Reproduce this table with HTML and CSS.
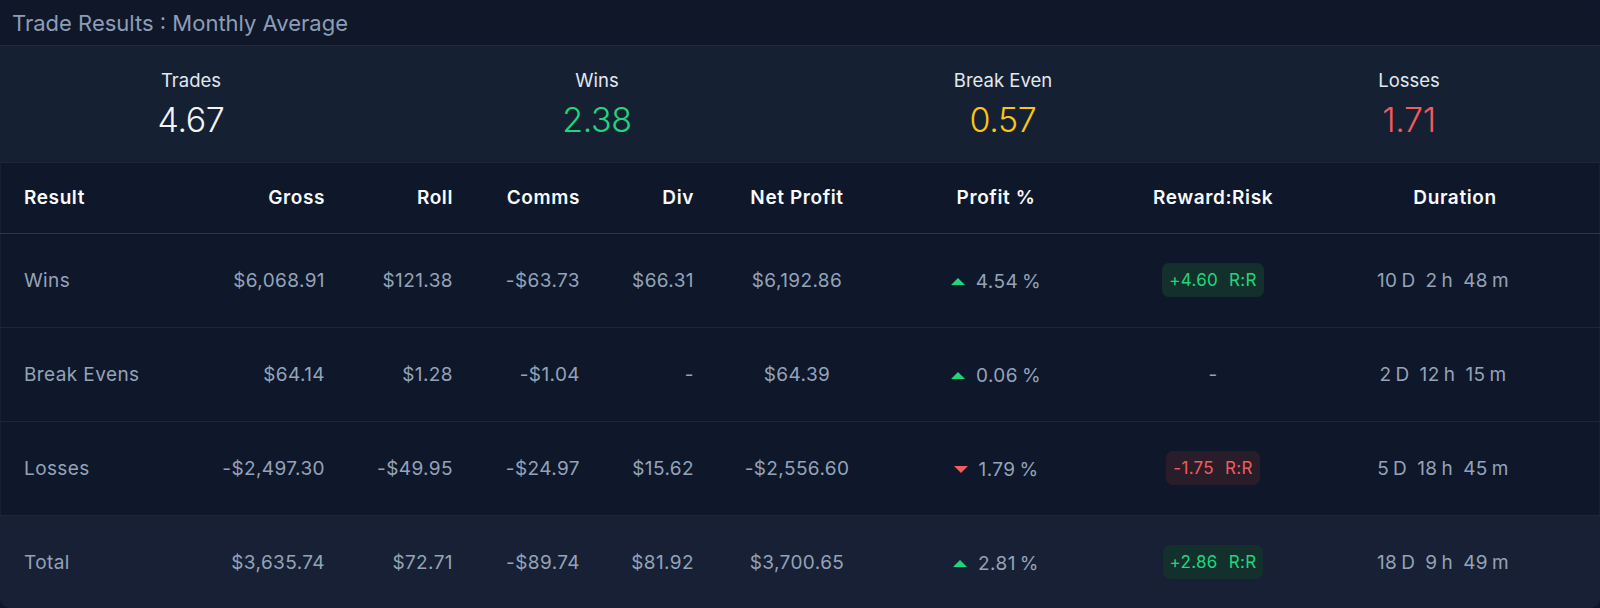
FILE: index.html
```html
<!DOCTYPE html>
<html lang="en">
<head>
<meta charset="utf-8">
<title>Trade Results : Monthly Average</title>
<link rel="stylesheet" href="styles.css">
</head>
<body>
<div class="card">
  <header class="card-title">Trade Results : Monthly Average</header>
  <section class="stats">
    <div class="stat"><div class="stat-label">Trades</div><div class="stat-value">4.67</div></div>
    <div class="stat"><div class="stat-label">Wins</div><div class="stat-value win">2.38</div></div>
    <div class="stat"><div class="stat-label">Break Even</div><div class="stat-value even">0.57</div></div>
    <div class="stat"><div class="stat-label">Losses</div><div class="stat-value loss">1.71</div></div>
  </section>
  <table class="results">
    <colgroup>
      <col class="c-result"><col class="c-gross"><col class="c-roll"><col class="c-comms"><col class="c-div"><col class="c-net"><col class="c-pct"><col class="c-rr"><col class="c-dur">
    </colgroup>
    <thead>
      <tr>
        <th class="left">Result</th>
        <th class="right">Gross</th>
        <th class="right">Roll</th>
        <th class="right">Comms</th>
        <th class="right">Div</th>
        <th class="center">Net Profit</th>
        <th class="center">Profit %</th>
        <th class="center">Reward:Risk</th>
        <th class="center dur dur-h">Duration</th>
      </tr>
    </thead>
    <tbody>
      <tr>
        <td class="left">Wins</td>
        <td class="right">$6,068.91</td>
        <td class="right">$121.38</td>
        <td class="right">-$63.73</td>
        <td class="right">$66.31</td>
        <td class="center">$6,192.86</td>
        <td class="center"><span class="pct"><svg class="tri" viewBox="0 0 14 7"><polygon points="0,7 7,0 14,7" fill="#20d67c"/></svg>4.54<span class="unit">%</span></span></td>
        <td class="center"><span class="badge up"><span>+4.60</span><span>R:R</span></span></td>
        <td class="center dur"><span class="span-group"><span>10<span class="unit">D</span></span><span>2<span class="unit">h</span></span><span>48<span class="unit">m</span></span></span></td>
      </tr>
      <tr>
        <td class="left">Break Evens</td>
        <td class="right">$64.14</td>
        <td class="right">$1.28</td>
        <td class="right">-$1.04</td>
        <td class="right">-</td>
        <td class="center">$64.39</td>
        <td class="center"><span class="pct"><svg class="tri" viewBox="0 0 14 7"><polygon points="0,7 7,0 14,7" fill="#20d67c"/></svg>0.06<span class="unit">%</span></span></td>
        <td class="center">-</td>
        <td class="center dur"><span class="span-group"><span>2<span class="unit">D</span></span><span>12<span class="unit">h</span></span><span>15<span class="unit">m</span></span></span></td>
      </tr>
      <tr>
        <td class="left">Losses</td>
        <td class="right">-$2,497.30</td>
        <td class="right">-$49.95</td>
        <td class="right">-$24.97</td>
        <td class="right">$15.62</td>
        <td class="center">-$2,556.60</td>
        <td class="center"><span class="pct"><svg class="tri" viewBox="0 0 14 7"><polygon points="0,0 14,0 7,7" fill="#f05d5e"/></svg>1.79<span class="unit">%</span></span></td>
        <td class="center"><span class="badge down"><span>-1.75</span><span>R:R</span></span></td>
        <td class="center dur"><span class="span-group"><span>5<span class="unit">D</span></span><span>18<span class="unit">h</span></span><span>45<span class="unit">m</span></span></span></td>
      </tr>
    </tbody>
    <tfoot>
      <tr>
        <td class="left">Total</td>
        <td class="right">$3,635.74</td>
        <td class="right">$72.71</td>
        <td class="right">-$89.74</td>
        <td class="right">$81.92</td>
        <td class="center">$3,700.65</td>
        <td class="center"><span class="pct"><svg class="tri" viewBox="0 0 14 7"><polygon points="0,7 7,0 14,7" fill="#20d67c"/></svg>2.81<span class="unit">%</span></span></td>
        <td class="center"><span class="badge up"><span>+2.86</span><span>R:R</span></span></td>
        <td class="center dur"><span class="span-group"><span>18<span class="unit">D</span></span><span>9<span class="unit">h</span></span><span>49<span class="unit">m</span></span></span></td>
      </tr>
    </tfoot>
  </table>
</div>
</body>
</html>
```
FILE: styles.css
```css
* { box-sizing: border-box; }

html, body {
  margin: 0;
  padding: 0;
  background: #0f172a;
}

body {
  font-family: Inter, "Noto Sans", "Liberation Sans", sans-serif;
  width: 1600px;
  height: 608px;
  overflow: hidden;
}

.card {
  width: 1600px;
  height: 608px;
  border-radius: 10px;
  overflow: hidden;
  background: #0f172a;
  box-shadow: inset 0 0 0 1px rgba(148, 163, 184, 0.06);
}

.card-title {
  height: 45px;
  padding: 1px 12px 0;
  display: flex;
  align-items: center;
  font-size: 22px;
  color: #8d9db6;
  background: #0f1729;
}

.stats {
  display: grid;
  grid-template-columns: repeat(4, 1fr);
  column-gap: 24px;
  padding: 23px 0 22px;
  background: #162033;
  border-top: 1px solid #1e2a3d;
  border-bottom: 1px solid #1c2638;
}

.stat {
  display: flex;
  flex-direction: column;
  align-items: center;
  gap: 9px;
}

.stat-label {
  font-size: 18.5px;
  line-height: 22px;
  color: #e2e8f0;
}

.stat-value {
  font-size: 34px;
  line-height: 40px;
  font-weight: 300;
  letter-spacing: -0.4px;
  color: #f1f5f9;
}

.stat-value.win { color: #20d67c; }
.stat-value.even { color: #f8c614; }
.stat-value.loss { color: #f25c5e; }

.results {
  width: 1600px;
  table-layout: fixed;
  border-collapse: collapse;
  border-spacing: 0;
  font-size: 19px;
  letter-spacing: 0.4px;
  color: #94a3b8;
}

.c-result { width: 200px; }
.c-gross { width: 125px; }
.c-roll { width: 128px; }
.c-comms { width: 127px; }
.c-div { width: 114px; }
.c-net { width: 206px; }
.c-pct { width: 192px; }
.c-rr { width: 242px; }
.c-dur { width: 266px; }

.results th,
.results td {
  padding: 0;
  white-space: nowrap;
}

.results th {
  height: 70px;
  font-weight: 600;
  letter-spacing: 0.6px;
  color: #f8fafc;
  border-bottom: 1px solid #2b384b;
}

.results td {
  height: 94px;
  border-bottom: 1px solid #1c2638;
}

.results tfoot td {
  background: #172034;
  border-bottom: none;
}

.left { text-align: left; padding-left: 24px !important; }
.right { text-align: right; }
.center { text-align: center; }

.dur { padding-right: 48px !important; }
.dur-h { padding-left: 24px !important; }

.unit { margin-left: 4px; }

.span-group {
  display: inline-flex;
  gap: 10px;
}

.pct {
  display: inline-flex;
  align-items: center;
}

.tri {
  width: 14px;
  height: 7px;
  margin-right: 11px;
}

.badge {
  display: inline-flex;
  gap: 11px;
  padding: 6px 7px;
  border-radius: 7px;
  font-size: 17px;
  letter-spacing: 0.3px;
  line-height: 22px;
}

.badge.up {
  background: #14302c;
  color: #20d67c;
}

.badge.down {
  background: #2a1d2a;
  color: #f25c5e;
}
```
